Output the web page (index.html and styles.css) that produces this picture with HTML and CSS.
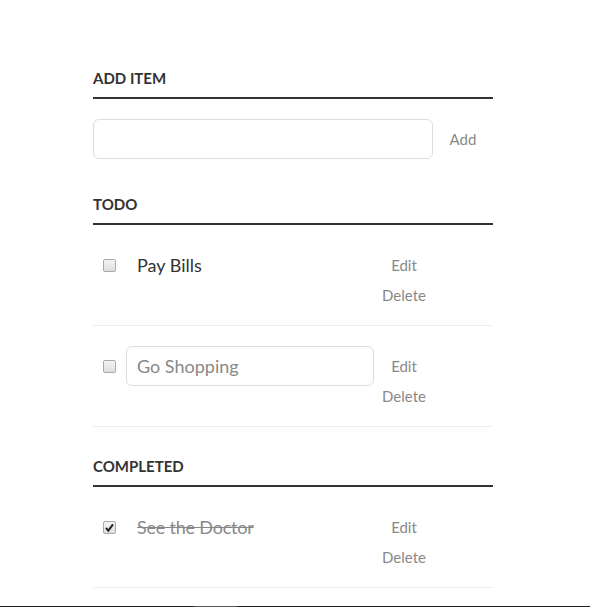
FILE: index.html
```html
<!DOCTYPE html>
<html lang="en">
<head>
<meta charset="utf-8">
<title>Todo App</title>
<link rel="stylesheet" href="styles.css">
</head>
<body>
<div class="container">
  <h3 class="heading">Add Item</h3>
  <div class="add-row">
    <input class="text-input new-task" type="text">
    <button class="btn">Add</button>
  </div>

  <h3 class="heading section">Todo</h3>
  <ul class="tasks">
    <li class="task">
      <span class="check"></span>
      <span class="task-label">Pay Bills</span>
      <div class="actions">
        <button class="btn">Edit</button>
        <button class="btn">Delete</button>
      </div>
    </li>
    <li class="task">
      <span class="check"></span>
      <input class="text-input task-edit" type="text" value="Go Shopping">
      <div class="actions">
        <button class="btn">Edit</button>
        <button class="btn">Delete</button>
      </div>
    </li>
  </ul>

  <h3 class="heading section-completed">Completed</h3>
  <ul class="tasks">
    <li class="task">
      <span class="check checked"><svg viewBox="0 0 13 13" width="13" height="13"><path d="M3 7 L5.3 9.6 L10 3.4" fill="none" stroke="#222" stroke-width="2"/></svg></span>
      <span class="task-label done">See the Doctor</span>
      <div class="actions">
        <button class="btn">Edit</button>
        <button class="btn">Delete</button>
      </div>
    </li>
  </ul>
</div>
<div class="bottom-line"><span class="bottom-seg"></span></div>
</body>
</html>
```

FILE: styles.css
```css
html, body {
  margin: 0;
  padding: 0;
  background: #fff;
}
body {
  color: #4d4d4d;
  font-family: Lato, "Open Sans", sans-serif;
}
.container {
  width: 400px;
  margin: 39px 0 0 calc(50% - 202px);
}
.heading {
  margin: 0;
  padding: 30px 0 10px;
  font-size: 15px;
  line-height: 18px;
  font-weight: 700;
  color: #333;
  text-transform: uppercase;
  border-bottom: 2px solid #333;
}
.add-row {
  display: flex;
  align-items: flex-start;
  margin-top: 20px;
}
.text-input {
  margin: 0;
  box-sizing: border-box;
  height: 40px;
  font-size: 18px;
  line-height: 18px;
  padding: 10px;
  border: 1px solid #ddd;
  background: #fff;
  border-radius: 6px;
  font-family: Lato, sans-serif;
  color: #888;
  outline: none;
}
.new-task {
  width: 340px;
}
.btn {
  display: block;
  background: none;
  border: 0;
  color: #888;
  font-size: 15px;
  line-height: 18px;
  padding: 1px 0;
  width: 60px;
  margin: 10px 0 0;
  font-family: Lato, sans-serif;
  cursor: pointer;
  text-align: center;
}
.section {
  margin-top: 6px;
}
.tasks {
  margin: 0;
  padding: 0;
  list-style: none;
}
.task {
  display: flex;
  align-items: flex-start;
  padding: 20px 0;
  border-bottom: 1px solid #eee;
}
.check {
  box-sizing: border-box;
  width: 13px;
  height: 13px;
  margin: 14px 10px 0;
  border: 1px solid #a9a9a9;
  border-radius: 2px;
  background: linear-gradient(#f4f4f4, #dedede);
  display: flex;
  align-items: center;
  justify-content: center;
  flex-shrink: 0;
}
.check svg {
  display: block;
  margin: -1px;
}
.task-label {
  width: 237px;
  padding-left: 11px;
  font-size: 18px;
  line-height: 40px;
  color: #333;
}
.task-label.done {
  color: #888;
  text-decoration: line-through;
  letter-spacing: -0.2px;
}
.task-edit {
  width: 248px;
}
.actions {
  display: flex;
  flex-direction: column;
  width: 60px;
}
.bottom-line {
  position: fixed;
  left: 0;
  right: 0;
  bottom: 0;
  height: 1px;
  background: #222;
}
.bottom-seg {
  display: block;
  margin-left: 194px;
  width: 43px;
  height: 1px;
  background: #555;
}
```
